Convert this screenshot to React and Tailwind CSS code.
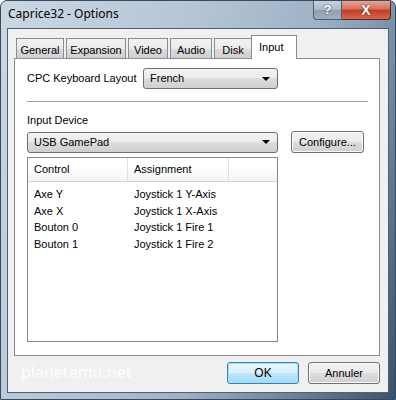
import { useState } from 'react';

const tabs = [
  ['General', 'w-[48px]'],
  ['Expansion', 'w-[60px]'],
  ['Video', 'w-[40px]'],
  ['Audio', 'w-[42px]'],
  ['Disk', 'w-[38px]'],
  ['Input', 'w-[46px]'],
];

const rows = [
  ['Axe Y', 'Joystick 1 Y-Axis'],
  ['Axe X', 'Joystick 1 X-Axis'],
  ['Bouton 0', 'Joystick 1 Fire 1'],
  ['Bouton 1', 'Joystick 1 Fire 2'],
];

function Combo({ value, className = '' }) {
  return (
    <div
      className={`h-[21px] flex items-center justify-between pl-[6px] pr-[7px] rounded-[3px] border border-[#707070] bg-[linear-gradient(#f2f2f2_0%,#ebebeb_50%,#dddddd_50%,#cfcfcf_100%)] ${className}`}
    >
      <span>{value}</span>
      <span className="w-0 h-0 border-l-[4px] border-r-[4px] border-t-[4px] border-l-transparent border-r-transparent border-t-black" />
    </div>
  );
}

function Button({ children, primary, className = '' }) {
  return (
    <div
      className={`h-[22px] flex items-center justify-center rounded-[3px] border ${
        primary
          ? 'border-[#3c7fb1] bg-[linear-gradient(#eaf6fd_0%,#d9f0fc_50%,#bee6fd_50%,#a7d9f5_100%)] shadow-[inset_0_0_0_1px_#9fe3fb]'
          : 'border-[#707070] bg-[linear-gradient(#f2f2f2_0%,#ebebeb_50%,#dddddd_50%,#cfcfcf_100%)] shadow-[inset_0_0_0_1px_#fcfcfc]'
      } ${className}`}
    >
      {children}
    </div>
  );
}

export default function App() {
  const [active] = useState('Input');

  return (
    <div className="w-[396px] h-[400px] flex flex-col rounded-t-[7px] border border-[#3a4a5c] bg-[linear-gradient(110deg,#cbd7e3_0%,#b6c6d6_35%,#9fb2c6_60%,#6d849c_80%,#3c5269_100%)] font-['Liberation_Sans',sans-serif] text-[11px] text-black overflow-hidden">
      {/* Title bar */}
      <div className="h-[27px] flex items-start justify-between pl-[7px] pr-[4px]">
        <span className="mt-[5px] font-['Noto_Sans',sans-serif] text-[12px] leading-[16px]">
          Caprice32 - Options
        </span>
        <div className="flex">
          <div className="w-[29px] h-[19px] flex items-center justify-center rounded-bl-[4px] border border-t-0 border-[#4d5d6f] bg-[linear-gradient(#c7d2dd_0%,#a9b8c8_50%,#8b9db0_50%,#9fb0c2_100%)] text-white font-bold text-[13px] [text-shadow:0_0_2px_#333]">
            ?
          </div>
          <div className="w-[49px] h-[19px] flex items-center justify-center rounded-br-[4px] border border-t-0 border-l-0 border-[#5a2a22] bg-[linear-gradient(#e6a496_0%,#d7705c_45%,#c43c22_50%,#d2694f_100%)] text-white font-bold text-[14px] [text-shadow:0_0_2px_#3a0e06]">
            X
          </div>
        </div>
      </div>

      {/* Client area */}
      <div className="flex-1 mx-[6px] mb-[6px] border border-[#4f5f71] bg-[#f0f0f0] flex flex-col pt-[6px] pl-[6px] pr-[8px]">
        {/* Tab strip */}
        <div className="flex items-end h-[23px] pl-[2px] gap-[2px] relative z-10">
          {tabs.map(([t, w]) =>
            t === active ? (
              <div
                key={t}
                className={`${w} h-[24px] -mb-[1px] pl-[7px] pt-[3px] border border-b-0 border-[#898c95] bg-white -ml-[3px]`}
              >
                {t}
              </div>
            ) : (
              <div
                key={t}
                className={`${w} h-[20px] pt-[3px] text-center border border-b-0 border-[#898c95] bg-[linear-gradient(#f2f2f2_0%,#ebebeb_50%,#dddddd_50%,#cfcfcf_100%)]`}
              >
                {t}
              </div>
            )
          )}
        </div>

        {/* Panel */}
        <div className="h-[298px] border border-[#898c95] bg-white px-[12px] pt-[9px]">
          <div className="flex items-center">
            <span className="w-[116px]">CPC Keyboard Layout</span>
            <Combo value="French" className="w-[135px]" />
          </div>

          <div className="mt-[12px] h-px bg-[#a0a0a0] mr-[-1px]" />

          <div className="mt-[12px] leading-[13px]">Input Device</div>

          <div className="mt-[4px] flex items-center">
            <Combo value="USB GamePad" className="w-[251px]" />
            <Button className="ml-[13px] w-[73px]">Configure...</Button>
          </div>

          {/* List view */}
          <div className="mt-[4px] w-[251px] h-[185px] border border-[#828790] bg-white">
            <div className="flex h-[24px] border-b border-[#d5d5d5] bg-[linear-gradient(#ffffff_0%,#ffffff_40%,#f2f3f5_100%)]">
              <div className="w-[100px] pl-[6px] flex items-center border-r border-[#e0e0e0]">Control</div>
              <div className="w-[101px] pl-[6px] flex items-center border-r border-[#e0e0e0]">Assignment</div>
              <div className="flex-1" />
            </div>
            <div className="pt-[4px]">
              {rows.map(([c, a]) => (
                <div key={c} className="flex h-[16.5px] items-center">
                  <span className="w-[100px] pl-[6px]">{c}</span>
                  <span className="pl-[6px]">{a}</span>
                </div>
              ))}
            </div>
          </div>
        </div>

        {/* Bottom row */}
        <div className="flex items-center mt-[6px]">
          <span className="ml-[7px] -mt-[2px] font-['Noto_Sans',sans-serif] text-[16px] text-white/85">
            planetemu.net
          </span>
          <div className="ml-auto flex gap-[9px]">
            <Button primary className="w-[72px] text-[12px]">OK</Button>
            <Button className="w-[72px]">Annuler</Button>
          </div>
        </div>
      </div>
    </div>
  );
}
